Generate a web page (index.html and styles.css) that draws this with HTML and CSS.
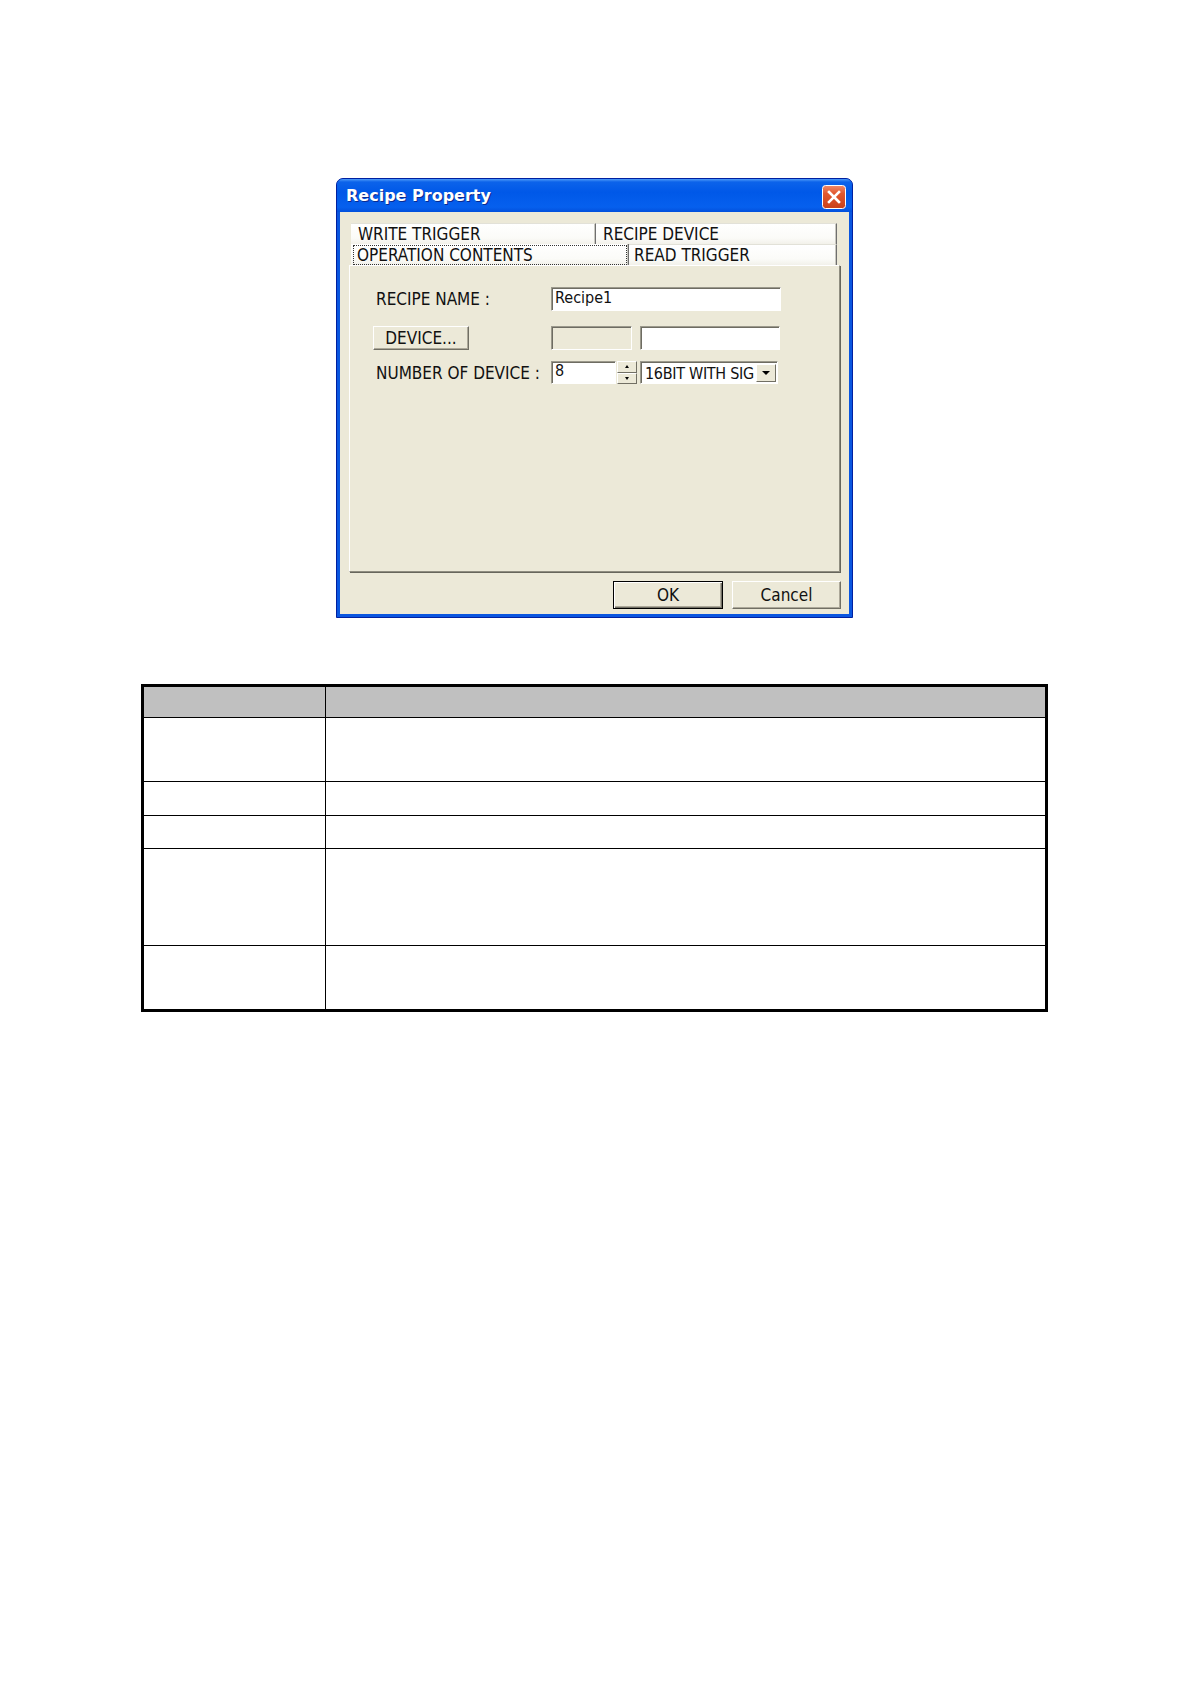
FILE: index.html
```html
<!DOCTYPE html>
<html>
<head>
<meta charset="utf-8">
<title>Recipe Property</title>
<link rel="stylesheet" href="styles.css">
</head>
<body>
<div class="page">
  <div class="dialog">
    <div class="titlebar">
      <span class="title">Recipe Property</span>
      <span class="close">
        <svg width="24" height="24" viewBox="0 0 24 24">
          <defs>
            <linearGradient id="cg" x1="0" y1="0" x2="0" y2="1">
              <stop offset="0" stop-color="#f08a6a"/>
              <stop offset="0.35" stop-color="#e2582f"/>
              <stop offset="1" stop-color="#c8401a"/>
            </linearGradient>
          </defs>
          <rect x="0.5" y="0.5" width="23" height="23" rx="3" ry="3" fill="url(#cg)" stroke="#ffffff" stroke-width="1"/>
          <path d="M7 7 L17 17 M17 7 L7 17" stroke="#ffffff" stroke-width="2.6" stroke-linecap="square" fill="none"/>
        </svg>
      </span>
    </div>
    <div class="client">
      <div class="tabrow">
        <div class="tab tab-w1">WRITE TRIGGER</div>
        <div class="tab tab-fill">RECIPE DEVICE</div>
      </div>
      <div class="tabrow">
        <div class="tab tab-w2 selected"><span class="focus">OPERATION CONTENTS</span></div>
        <div class="tab tab-fill">READ TRIGGER</div>
      </div>
      <div class="panel">
        <div class="frow frow-1">
          <div class="cell-label"><span class="label">RECIPE NAME :</span></div>
          <div class="edit edit-name">Recipe1</div>
        </div>
        <div class="frow frow-2">
          <div class="cell-label"><span class="pushbtn">DEVICE...</span></div>
          <div class="edit edit-disabled"></div>
          <div class="edit edit-wide"></div>
        </div>
        <div class="frow frow-3">
          <div class="cell-label"><span class="label">NUMBER OF DEVICE :</span></div>
          <div class="edit edit-num">8</div>
          <div class="spin">
            <span class="spin-btn"><span class="tri-up"></span></span>
            <span class="spin-btn"><span class="tri-down"></span></span>
          </div>
          <div class="combo">
            <span class="combo-text">16BIT WITH SIG</span>
            <span class="combo-btn"><span class="tri-down big"></span></span>
          </div>
        </div>
      </div>
      <div class="buttons">
        <span class="btn btn-default">OK</span>
        <span class="btn">Cancel</span>
      </div>
    </div>
  </div>

  <div class="spec">
    <div class="c c1 head"></div><div class="c c2 head"></div>
    <div class="c c1 r1"></div><div class="c c2 r1"></div>
    <div class="c c1 r2"></div><div class="c c2 r2"></div>
    <div class="c c1 r3"></div><div class="c c2 r3"></div>
    <div class="c c1 r4"></div><div class="c c2 r4"></div>
    <div class="c c1 r5 last"></div><div class="c c2 r5 last"></div>
  </div>
</div>
</body>
</html>
```

FILE: styles.css
```css
* { box-sizing: border-box; }
html, body { margin: 0; padding: 0; background: #ffffff; }
body {
  font-family: "Liberation Sans Narrow", "DejaVu Sans Condensed", "Liberation Sans", Arial, sans-serif;
  color: #000;
  width: 1191px;
  min-height: 1684px;
}
.page { padding-top: 178px; }

/* ---------- dialog window ---------- */
.dialog {
  width: 517px;
  height: 440px;
  margin-left: 336px;
  display: flex;
  flex-direction: column;
  background: #0a56e0;
  border: 1px solid #0020a0;
  border-radius: 7px 7px 0 0;
}
.titlebar {
  height: 33px;
  display: flex;
  align-items: center;
  justify-content: space-between;
  padding: 0 6px 0 9px;
  border-radius: 6px 6px 0 0;
  background: linear-gradient(to bottom, #4e9af8 0px, #0c63ea 3px, #0058e8 40%, #0660ee 85%, #0250dc 100%);
}
.title {
  font-family: "DejaVu Sans", "Liberation Sans", sans-serif;
  font-weight: bold;
  font-size: 16px;
  color: #ffffff;
  text-shadow: 1px 1px 0 #0a2a90;
}
.close { display: flex; margin-top: 3px; }
.close svg { display: block; }

.client {
  flex: 1;
  margin: 0 3px 3px 3px;
  background: #ece9d8;
  padding: 11px 9px 0 9px;
  display: flex;
  flex-direction: column;
}

/* ---------- tabs ---------- */
.tabrow {
  display: flex;
  height: 21px;
  margin: 0 3px 0 2px;
}
.tab {
  height: 21px;
  font-size: 17px;
  line-height: 20px;
  padding-left: 7px;
  white-space: nowrap;
  color: #111;
  background: linear-gradient(to bottom, #ffffff 0%, #fbfbf8 70%, #f2f1ea 100%);
  border-top: 1px solid #e2e1d8;
  border-right: 1px solid #6f6f6f;
  box-shadow: inset -1px 0 0 #c9c8c0;
}
.tab-w1 { width: 245px; }
.tab-w2 { width: 278px; }
.tab-fill { flex: 1; }
.tab.selected { padding: 1px 1px 0 2px; border-top: none; }
.focus {
  display: block;
  height: 20px;
  line-height: 18px;
  padding-left: 3px;
  border: 1px dotted #333;
}
.tabrow + .tabrow .tab-fill { padding-left: 5px; }

/* ---------- tab panel ---------- */
.panel {
  height: 307px;
  border: 1px solid;
  border-color: #ffffff #8f8d80 #8f8d80 #ffffff;
  box-shadow: 1px 1px 0 #67665c;
  padding: 21px 0 0 23px;
  display: flex;
  flex-direction: column;
}
.frow {
  display: flex;
  align-items: center;
  height: 24px;
  font-size: 17px;
  color: #111;
}
.frow-2 { margin-top: 15px; }
.frow-3 { margin-top: 11px; height: 23px; }
.cell-label { width: 178px; flex: none; display: flex; align-items: center; }
.label { padding-left: 3px; white-space: nowrap; }

.edit {
  height: 100%;
  background: #ffffff;
  border: 1px solid;
  border-color: #9b998c #ffffff #ffffff #9b998c;
  box-shadow: inset 1px 1px 0 #6e6c62;
  font-size: 16px;
  line-height: 20px;
  padding-left: 3px;
  white-space: nowrap;
}
.edit-name { width: 230px; }
.edit-disabled { width: 81px; background: #ece9d8; }
.edit-wide { width: 140px; margin-left: 8px; }
.edit-num { width: 65px; line-height: 17px; }

.pushbtn {
  display: flex;
  align-items: center;
  justify-content: center;
  width: 96px;
  height: 24px;
  background: #ece9d8;
  border: 1px solid;
  border-color: #ffffff #716f64 #716f64 #ffffff;
  box-shadow: inset -1px -1px 0 #aca899;
  font-size: 17px;
  padding-bottom: 1px;
}

.spin {
  width: 20px;
  height: 23px;
  margin-left: 1px;
  display: flex;
  flex-direction: column;
}
.spin-btn {
  flex: 1;
  display: flex;
  align-items: center;
  justify-content: center;
  background: #ece9d8;
  border: 1px solid;
  border-color: #ffffff #716f64 #716f64 #ffffff;
}
.tri-up {
  width: 0; height: 0;
  border-left: 2.5px solid transparent;
  border-right: 2.5px solid transparent;
  border-bottom: 3px solid #000;
}
.tri-down {
  width: 0; height: 0;
  border-left: 2.5px solid transparent;
  border-right: 2.5px solid transparent;
  border-top: 3px solid #000;
}
.tri-down.big {
  border-left-width: 4px;
  border-right-width: 4px;
  border-top-width: 4px;
}

.combo {
  width: 138px;
  height: 23px;
  margin-left: 3px;
  display: flex;
  align-items: stretch;
  background: #ffffff;
  border: 1px solid;
  border-color: #9b998c #ffffff #ffffff #9b998c;
  box-shadow: inset 1px 1px 0 #6e6c62;
  padding: 2px 1px 1px 2px;
}
.combo-text {
  flex: 1;
  font-size: 16px;
  line-height: 19px;
  padding-left: 2px;
  letter-spacing: -0.3px;
  white-space: nowrap;
  overflow: hidden;
}
.combo-btn {
  width: 20px;
  flex: none;
  display: flex;
  align-items: center;
  justify-content: center;
  background: #ece9d8;
  border: 1px solid;
  border-color: #ffffff #716f64 #716f64 #ffffff;
}

/* ---------- OK / Cancel ---------- */
.buttons {
  display: flex;
  justify-content: flex-end;
  gap: 9px;
  margin-top: 9px;
  margin-right: -1px;
}
.btn {
  width: 109px;
  height: 28px;
  display: flex;
  align-items: center;
  justify-content: center;
  font-size: 17px;
  color: #111;
  background: #ece9d8;
  border: 1px solid;
  border-color: #ffffff #716f64 #716f64 #ffffff;
  box-shadow: inset -1px -1px 0 #aca899;
  padding-bottom: 1px;
}
.btn-default {
  width: 110px;
  border: 1px solid #000;
  box-shadow: inset 1px 1px 0 #ffffff, inset -1px -1px 0 #716f64, inset -2px -2px 0 #aca899;
}

/* ---------- spec table ---------- */
.spec {
  width: 907px;
  margin: 66px 0 0 141px;
  border: 3px solid #000;
  display: grid;
  grid-template-columns: 182px 1fr;
  grid-template-rows: 31px 64px 34px 33px 97px 63px;
}
.c { border-bottom: 1px solid #000; background: #fff; }
.c1 { border-right: 1px solid #000; }
.c.last { border-bottom: none; }
.head { background: #c0c0c0; }
```
